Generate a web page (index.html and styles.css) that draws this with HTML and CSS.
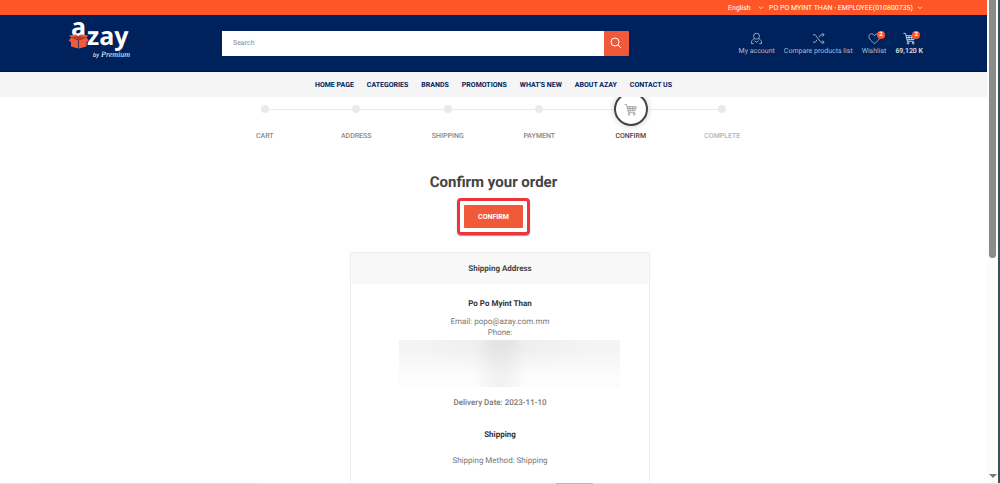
FILE: index.html
```
<!DOCTYPE html>
<html lang="en">
<head>
    <meta charset="UTF-8">
    <meta name="viewport" content="width=device-width, initial-scale=1.0">
    <title>Azay - Confirm your order</title>
    <link rel="stylesheet" href="styles.css">
</head>
<body>
    <div class="window">
        <div class="page">
            <!-- top bar -->
            <div class="top-bar">
                <div class="language">
                    <select aria-label="Language">
                        <option>English</option>
                    </select>
                    <svg class="chevron" viewBox="0 0 6 4"><path d="M1 .7l2 2 2-2"/></svg>
                </div>
                <button class="user-menu" type="button">PO PO MYINT THAN - EMPLOYEE(010800735)
                    <svg class="chevron" viewBox="0 0 6 4"><path d="M1 .7l2 2 2-2"/></svg>
                </button>
            </div>

            <!-- header -->
            <header class="header">
                <a class="logo" href="#" aria-label="Azay by Premium">
                    <svg viewBox="0 0 64 40">
                        <text class="logo-name" x="3" y="13">a</text>
                        <text class="logo-name" x="19" y="22">zay</text>
                        <g fill="#f15a38">
                            <path d="M3 15.500l7.300 2v8L3 23.500z"/>
                            <path d="M11 17.500l7.500-2v8l-7.500 2z"/>
                            <path d="M3 14.500L.5 18l7 2.200 3-3z"/>
                            <path d="M18.500 14.500L21 18l-7 2.200-3-3z"/>
                            <path d="M3 14.300L1 12.500l7-1 2.700 2 2.600-2 7 1-1.800 1.800-7.700 2.400z"/>
                            <path d="M3.500 14.300l7-1.400 7.500 1.400-7.300 2.200z" fill="#b93b25"/>
                        </g>
                        <text class="logo-by" x="25" y="34">by</text>
                        <text class="logo-brand" x="33" y="34">Premium</text>
                    </svg>
                </a>
                <form class="search">
                    <input type="text" placeholder="Search" aria-label="Search">
                    <button type="submit" aria-label="Search">
                        <svg viewBox="0 0 12 12"><circle cx="5" cy="5" r="4"/><path d="M8 8l3 3"/></svg>
                    </button>
                </form>
                <div class="header-links">
                    <a href="#">
                        <svg class="icon" viewBox="0 0 14 14"><circle cx="7" cy="4.5" r="3.2"/><path d="M4.800 7.200C2.500 8 1.500 9.500 1.500 12.500h2.500M9.200 7.200c2.300.8 3.300 2.300 3.300 5.300H10M4.800 9.500L7 11l2.200-1.500"/></svg>
                        My account
                    </a>
                    <a href="#">
                        <svg class="icon" viewBox="0 0 14 14"><path d="M1 3h2.500l6 8H13M1 11h2.500l2-2.700M7.500 5.700l2-2.700H13M11 1l2 2-2 2M11 9l2 2-2 2"/></svg>
                        Compare products list
                    </a>
                    <a href="#">
                        <svg class="icon" viewBox="0 0 14 14"><path d="M7 12.500C4 10 1 7.800 1 4.800 1 1.500 5.300.8 7 4c1.700-3.200 6-2.500 6 .8 0 3-3 5.200-6 7.700z"/></svg>
                        <span class="badge">2</span>
                        Wishlist
                    </a>
                    <a class="cart-link" href="#">
                        <svg class="icon" viewBox="0 0 14 14"><path d="M.5 1.500h2.200l2 8.500h7M3.200 4h10l-1.200 4-7.700.4M3.700 6h8.800M6.500 4v4M9.500 4v4"/><circle cx="5.500" cy="12" r="1"/><circle cx="11" cy="12" r="1"/></svg>
                        <span class="badge">2</span>
                        69,120 K
                    </a>
                </div>
            </header>

            <nav class="main-nav">
                <a href="#">HOME PAGE</a>
                <a href="#">CATEGORIES</a>
                <a href="#">BRANDS</a>
                <a href="#">PROMOTIONS</a>
                <a href="#">WHAT'S NEW</a>
                <a href="#">ABOUT AZAY</a>
                <a href="#">CONTACT US</a>
            </nav>

            <!-- checkout progress -->
            <ol class="steps">
                <li><span class="marker"><i class="dot"></i></span>CART</li>
                <li><span class="marker"><i class="dot"></i></span>ADDRESS</li>
                <li><span class="marker"><i class="dot"></i></span>SHIPPING</li>
                <li><span class="marker"><i class="dot"></i></span>PAYMENT</li>
                <li class="current">
                    <span class="marker">
                        <span class="circle">
                            <svg viewBox="0 0 14 14"><path d="M.5 1.500h2.200l2 8.500h7M3.200 4h10l-1.200 4-7.700.4M3.700 6h8.800M6.500 4v4M9.500 4v4"/><circle cx="5.500" cy="12" r="1"/><circle cx="11" cy="12" r="1"/></svg>
                        </span>
                    </span>CONFIRM
                </li>
                <li class="inactive"><span class="marker"><i class="dot"></i></span>COMPLETE</li>
            </ol>

            <main>
                <h1>Confirm your order</h1>
                <div class="confirm">
                    <button type="button">CONFIRM</button>
                </div>

                <div class="order-data">
                    <section class="order-card">
                        <h2>Shipping Address</h2>
                        <div class="order-body">
                            <h3>Po Po Myint Than</h3>
                            <p>Email: popo@azay.com.mm</p>
                            <p>Phone:</p>
                            <div class="hidden-details"></div>
                            <p class="delivery">Delivery Date: 2023-11-10</p>
                            <h3>Shipping</h3>
                            <p class="method">Shipping Method: Shipping</p>
                        </div>
                    </section>
                </div>
            </main>
        </div>

        <!-- scrollbar -->
        <div class="scrollbar">
            <div class="thumb"></div>
            <svg viewBox="0 0 8 6"><path d="M0 1h8L4 5z"/></svg>
        </div>
    </div>
    <div class="bottom-edge"><span class="status"></span><span class="task"></span></div>
</body>
</html>
```
FILE: styles.css
```
* {
    box-sizing: border-box;
}

body {
    display: flex;
    flex-direction: column;
    height: 100vh;
    margin: 0;
    overflow: hidden;
    font-family: Roboto, "Liberation Sans", sans-serif;
    font-size: 8px;
    text-rendering: geometricPrecision;
    color: #777;
    background-color: #fff;
}

a {
    color: inherit;
    text-decoration: none;
}

button,
input,
select {
    padding: 0;
    border: none;
    font-family: inherit;
    font-size: 7px;
    text-rendering: inherit;
}

h1, h2, h3, p, ol {
    margin: 0;
    padding: 0;
}

svg {
    display: block;
    fill: none;
    stroke: currentColor;
}

.window {
    display: flex;
    flex: 1;
    min-height: 0;
    border-right: 2px solid #35515a;
}

.page {
    flex: 1;
    overflow: hidden;
}

/* top bar */
.top-bar {
    display: flex;
    justify-content: flex-end;
    gap: 5px;
    height: 15px;
    padding-right: 64px;
    background-color: #ff5627;
    color: #fff;
}

.language,
.user-menu {
    display: flex;
    align-items: center;
    gap: 4px;
}

.language select {
    width: 26px;
    appearance: none;
    background: none;
    color: #fff;
}

.user-menu {
    background: none;
    color: #fff;
}

.chevron {
    width: 6px;
    height: 4px;
    stroke-width: 0.8;
}

/* header */
.header {
    display: flex;
    align-items: center;
    height: 57px;
    padding: 0 64px 0 68px;
    background-color: #00225c;
    border-bottom: 1px solid #00124c;
}

.logo {
    width: 64px;
    margin-right: 90px;
}

.logo svg {
    width: 64px;
    height: 40px;
    overflow: visible;
    stroke: none;
}

.logo text {
    fill: #fff;
}

.logo-name {
    font-family: "Open Sans", sans-serif;
    font-size: 25px;
    font-weight: 700;
}

.logo-by {
    font-size: 6px;
    font-style: italic;
}

.logo-brand {
    font-family: "Liberation Serif", serif;
    font-size: 8px;
    font-style: italic;
}

.search {
    display: flex;
    flex: 1;
    height: 25px;
}

.search input {
    flex: 1;
    min-width: 0;
    padding: 0 11px;
    background-color: #fff;
}

.search input::placeholder {
    color: #888;
}

.search button {
    display: flex;
    align-items: center;
    justify-content: center;
    width: 25px;
    background-color: #f15a38;
    border-radius: 0 1px 1px 0;
    color: #fff;
}

.search svg {
    width: 12px;
    height: 12px;
}

.header-links {
    display: flex;
    gap: 9px;
    margin-left: 110px;
    font-size: 7px;
    line-height: 10px;
    color: #b5bccb;
    white-space: nowrap;
}

.header-links a {
    position: relative;
    display: flex;
    flex-direction: column;
    align-items: center;
    gap: 1px;
    padding-top: 2px;
}

.icon {
    width: 13px;
    height: 13px;
    stroke-width: 0.9;
}

.header-links .cart-link {
    color: #e4e7ee;
    font-weight: 500;
}

.badge {
    position: absolute;
    top: 1px;
    left: calc(50% + 3px);
    width: 8px;
    height: 8px;
    border-radius: 50%;
    background-color: #ff5627;
    color: #fff;
    font-size: 6px;
    font-weight: 700;
    line-height: 8px;
    text-align: center;
}

.main-nav {
    position: relative;
    z-index: 1;
    display: flex;
    align-items: center;
    justify-content: center;
    gap: 13px;
    height: 25px;
    background-color: #f5f5f5;
    color: #00225c;
    font-size: 7px;
    font-weight: 700;
}

/* checkout progress */
.steps {
    display: grid;
    grid-template-columns: repeat(6, 1fr);
    max-width: 549px;
    margin: -5px auto 0;
    list-style: none;
    font-size: 7px;
    font-weight: 500;
    line-height: 10px;
    text-align: center;
    color: #888;
}

.marker {
    display: flex;
    align-items: center;
    justify-content: center;
    height: 34px;
    margin-bottom: 5px;
}

/* connecting line on both sides of each marker */
.marker::before,
.marker::after {
    content: "";
    flex: 1;
    height: 1px;
    background-color: #e9ebeb;
}

.steps li:first-child .marker::before,
.steps li:last-child .marker::after {
    background: none;
}

.dot {
    width: 8px;
    height: 8px;
    border-radius: 50%;
    background-color: #e9ebeb;
}

.circle {
    display: flex;
    align-items: center;
    justify-content: center;
    width: 34px;
    height: 34px;
    border: 2px solid #444;
    border-radius: 50%;
    box-shadow: 0 0 6px rgba(0, 0, 0, 0.2);
    color: #888;
}

.circle svg {
    width: 13px;
    height: 13px;
    stroke-width: 0.8;
}

.steps .current {
    color: #444;
}

.steps .inactive {
    color: #b5b5b5;
}

/* order */
main {
    padding-top: 31px;
    text-align: center;
}

h1 {
    font-size: 15px;
    font-weight: 700;
    line-height: 20px;
    color: #444;
}

.confirm {
    width: 73px;
    margin: 6px auto 17px;
    padding: 4px;
    border: 3px solid #ee353b;
    border-radius: 4px;
    box-shadow: 0 1px 1px rgba(0, 0, 0, 0.4);
}

.confirm button {
    display: block;
    width: 100%;
    height: 23px;
    border-radius: 1px;
    background-color: #f15a38;
    color: #fff;
    font-weight: 700;
}

.order-data {
    padding-left: 13px;
}

.order-card {
    max-width: 300px;
    margin: 0 auto;
    border: 1px solid #eee;
    line-height: 11px;
}

.order-card h2 {
    padding: 10px;
    background-color: #f8f8f8;
    font-size: 8px;
    font-weight: 700;
    color: #444;
}

.order-body {
    padding: 14px 29px 30px 48px;
}

.order-body h3,
.order-body p {
    margin-right: 19px;
}

.order-body h3 {
    margin-bottom: 7px;
    font-size: 8px;
    font-weight: 700;
    color: #333;
}

.hidden-details {
    height: 47px;
    margin: 2px 0 10px;
    background:
        radial-gradient(ellipse 90px 36px at 48% 0, rgba(0, 0, 0, 0.03), transparent),
        linear-gradient(90deg, transparent 34%, rgba(0, 0, 0, 0.04) 43%, rgba(0, 0, 0, 0.04) 49%, transparent 57%),
        linear-gradient(#f4f4f4 20%, #fcfcfc 75%);
}

.order-body .delivery {
    margin-bottom: 21px;
    font-weight: 500;
}

.order-body .method {
    margin-top: 15px;
}

/* window edges */
.scrollbar {
    display: flex;
    flex-direction: column;
    align-items: center;
    justify-content: space-between;
    width: 11px;
    padding-bottom: 4px;
    background-color: #fcfcfa;
}

.thumb {
    width: 7px;
    height: 258px;
    border-radius: 0 0 4px 4px;
    background-color: #8b8b8b;
}

.scrollbar svg {
    width: 8px;
    height: 6px;
    fill: #777;
    stroke: none;
}

.bottom-edge {
    display: flex;
    height: 1px;
    background-color: #f1dfe7;
}

.status {
    width: 22%;
    margin-left: 37px;
    background-color: #ddd;
}

.task {
    width: 37px;
    margin-left: 299px;
    background-color: #f7a76c;
}
```
